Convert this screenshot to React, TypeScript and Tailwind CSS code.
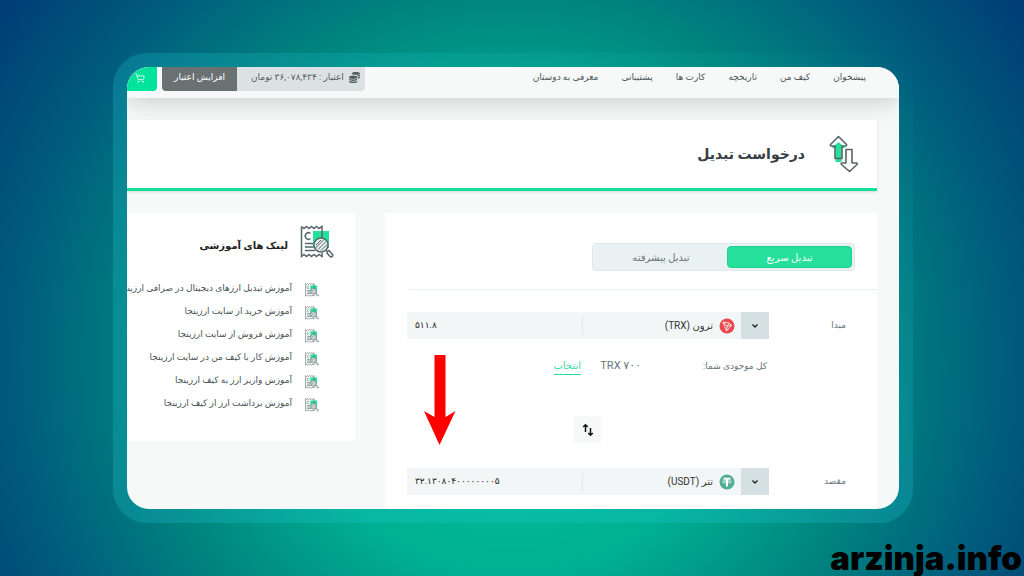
import React from 'react'
import { LuShoppingCart } from 'react-icons/lu'
import { FaCoins } from 'react-icons/fa'

const menu = ['پیشخوان', 'کیف من', 'تاریخچه', 'کارت ها', 'پشتیبانی', 'معرفی به دوستان']

const links = [
  'آموزش تبدیل ارزهای دیجیتال در صرافی ارزینجا',
  'آموزش خرید از سایت ارزینجا',
  'آموزش فروش از سایت ارزینجا',
  'آموزش کار با کیف من در سایت ارزینجا',
  'آموزش واریز ارز به کیف ارزینجا',
  'آموزش برداشت ارز از کیف ارزینجا',
]

const ReceiptIcon = ({ className }: { className: string }) => (
  <svg viewBox="0 0 34 34" className={className} fill="none" stroke="#56666a" strokeWidth="1.5" aria-hidden="true">
    <path d="M13 6h16v17H13z" fill="#24e09a" stroke="none" />
    <path d="M1.5 1.5l2.500 2 2.500-2 2.500 2 2.500-2 2.500 2 2.500-2 2.500 2 3-2V13M1.500 1.500v30l2.500-2 2.500 2 2.500-2 2.500 2 2.500-2 2.500 2 2.500-2 3 2V28" />
    <path d="M10.500 8.500a3.200 3.200 0 1 0 0 5M5 18.500h8M5 22h8M5 25.500h10" />
    <circle cx="21" cy="20" r="7" fill="#e6eeee" />
    <path d="M16 20l5-5M15.500 23l8.500-8.500M18 24.500l8-8M21 25.500l6-6" strokeWidth="1" />
    <path d="M26 25l2 2" />
    <path d="M27.500 26.500l1.500-1 3.500 4c1 1.500-1 3-2.500 2l-3-3.500z" fill="#fff" />
  </svg>
)

const ExchangeIcon = () => (
  <svg viewBox="0 0 30 38" className="h-[38px] w-[30px]" fill="none" stroke="#56666a" strokeWidth="1.6" strokeLinejoin="round" aria-hidden="true">
    <path d="M2.500 13l7-6 7 6h-4v14h-6V13z" fill="#24e09a" stroke="none" />
    <path d="M9.500 1.500L1.500 9.500q-.6 1.500 1 1.500H6v12.500h7V11h3.500q1.600 0 1-1.500z" />
    <path d="M17 14.500h6V28h4.500q1.500 0 .5 1.500L20.500 36.500 12.500 29.500q-1-1.500.5-1.500H17z" />
  </svg>
)

const TronIcon = () => (
  <svg viewBox="0 0 16 16" className="size-4" aria-hidden="true">
    <circle cx="8" cy="8" r="7.500" fill="#e9494f" />
    <path d="M4 4l6.200 1.200L12.500 7.300 7.500 13zM4 4l4.200 4.300M10.200 5.200L8.200 8.300 7.500 13M8.200 8.300l4.300-1" fill="none" stroke="#fff" strokeWidth=".8" />
  </svg>
)

const TetherIcon = () => (
  <svg viewBox="0 0 16 16" className="size-4" aria-hidden="true">
    <circle cx="8" cy="8" r="7.500" fill="#50af95" />
    <path d="M4.500 3.800h7v2H9v6.700H7V5.800H4.500z" fill="#fff" />
    <ellipse cx="8" cy="7.800" rx="4.500" ry="1.100" fill="none" stroke="#fff" strokeWidth=".8" />
  </svg>
)

type RowProps = {
  id: string
  label: string
  coin: string
  amount: string
  icon: React.ReactNode
}

const CoinRow = ({ id, label, coin, amount, icon }: RowProps) => (
  <div className="flex items-center pr-[31px] pl-[22px]">
    <label htmlFor={id} className="w-[77px] text-[9px] text-[#687477]">{label}</label>
    <div className="flex h-[27px] flex-1 items-center bg-[#f3f6f7]">
      <button aria-label="انتخاب ارز" className="flex h-full w-7 items-center justify-center bg-[#d5e0e2]">
        <svg viewBox="0 0 8 8" className="size-2" fill="none" stroke="#222" strokeWidth="1.400" aria-hidden="true"><path d="M1.500 2.500L4 5l2.500-2.500" /></svg>
      </button>
      <div className="flex h-[18px] w-[159px] items-center gap-[6px] border-l border-[#e2e8ea] pr-[6px] text-[10px] text-[#333]">
        {icon}
        <span>{coin}</span>
      </div>
      <input id={id} dir="ltr" defaultValue={amount} className="min-w-0 flex-1 bg-transparent px-2 text-left text-[9px] text-[#222] outline-none" />
    </div>
  </div>
)

const Header = () => (
  <header className="relative flex h-[31px] items-start justify-between bg-[#f7f9f8] pr-[33px] shadow-[0_4px_24px_rgba(0,0,0,0.18)]">
    <nav className="flex gap-[23px] pt-[2px] text-[9px] leading-4 text-[#4c5557]">
      {menu.map((item) => (
        <a key={item} href="#" className="whitespace-nowrap">{item}</a>
      ))}
    </nav>
    <div className="flex h-6 text-[9px]">
      <div className="flex w-[128px] items-center justify-between rounded-br-sm bg-[#dce2e3] pr-[5px] pb-[3px] pl-[14px] whitespace-nowrap text-[#525c60]">
        <FaCoins className="size-[11px]" />
        <span>اعتبار : ۳۶,۰۷۸,۴۳۴ تومان</span>
      </div>
      <button className="w-[75px] rounded-bl-sm bg-[#697173] pb-[3px] text-white">افزایش اعتبار</button>
      <button aria-label="سبد خرید" className="mr-[5px] flex w-[30px] items-center rounded-br-sm bg-[#00e39a] pr-3 pb-[3px] text-white">
        <LuShoppingCart className="size-[10px]" />
      </button>
    </div>
  </header>
)

const Exchange = () => (
  <section className="flex-1 bg-white pt-[30px]">
    <div className="mr-[22px] ml-auto flex h-7 w-[263px] rounded-sm border border-[#dfe9eb] bg-[#e9f1f3] p-[2px] text-[10px]">
      <button className="h-full w-[125px] rounded-sm border border-[#1fd08d] bg-[#24e09a] text-white">تبدیل سریع</button>
      <button className="flex-1 text-[#687477]">تبدیل پیشرفته</button>
    </div>
    <hr className="mt-[18px] mb-[22px] ml-6 border-[#eaf1f2]" />
    <CoinRow id="from" label="مبدا" coin="ترون (TRX)" amount="۵۱۱.۸" icon={<TronIcon />} />
    <div className="flex h-[55px] items-center pr-[110px] text-[9px] text-[#687477]">
      <span className="w-[126px]">کل موجودی شما:</span>
      <span className="w-[60px] text-right text-[11px]" dir="ltr">TRX ۷۰۰</span>
      <a href="#" className="border-b border-[#24e09a] text-[10px] leading-4 text-[#34d9a3]">انتخاب</a>
    </div>
    <div className="flex h-[74px] items-start pt-[22px] pr-[276px]">
      <button aria-label="جابجایی" className="flex size-[27px] items-center justify-center bg-[#f7f9f9]">
        <svg viewBox="0 0 12 14" className="h-[14px] w-3" fill="none" stroke="#111" strokeWidth="1.500" aria-hidden="true">
          <path d="M3.500 9V2M1.200 4l2.300-2.300L5.800 4M8.500 5v7M6.200 10l2.300 2.300 2.300-2.300" />
        </svg>
      </button>
    </div>
    <CoinRow id="to" label="مقصد" coin="تتر (USDT)" amount="۳۲.۱۳۰۸۰۴۰۰۰۰۰۰۰۰۵" icon={<TetherIcon />} />
  </section>
)

const Tutorials = () => (
  <aside className="h-[228px] w-[228px] shrink-0 bg-white pt-[12px] pr-[21px]">
    <div className="flex items-center gap-3">
      <ReceiptIcon className="size-[34px]" />
      <h2 className="pt-[6px] text-[10px] font-bold text-[#222]">لینک های آموزشی</h2>
    </div>
    <ul className="mt-[18px] mr-[15px] text-[9px] leading-[23px] text-[#4c5557]">
      {links.map((link) => (
        <li key={link} className="flex items-center gap-[13px]">
          <ReceiptIcon className="mt-[3px] size-[14px] shrink-0" />
          <a href="#" className="whitespace-nowrap">{link}</a>
        </li>
      ))}
    </ul>
  </aside>
)

const App = () => {
  return (
    <div className="relative min-h-screen bg-[radial-gradient(circle_620px_at_50%_62%,#00c79a,#00b092_35%,#00857f_58%,#005c7d_80%,#003d75)] py-[53px] pr-[111px] pl-[113px] font-['Roboto','DejaVu_Sans',sans-serif]">
      <div className="rounded-[34px] bg-linear-to-tr from-[#20c8d8]/25 via-[#20c8d8]/25 to-[#20c8d8]/0 p-[14px]">
        <main dir="rtl" className="flex h-[442px] flex-col overflow-hidden rounded-[22px] bg-[#f7f9f8]">
          <Header />
          <div className="relative mt-[22px] mr-[22px] flex h-[71px] shrink-0 items-center gap-6 border-b-3 border-[#14df96] bg-white pr-[18px] shadow-sm">
            <ExchangeIcon />
            <h1 className="text-[14px] font-bold text-[#364044]">درخواست تبدیل</h1>
          </div>
          <div className="mt-[22px] mr-[22px] flex flex-1 gap-[30px]">
            <Exchange />
            <Tutorials />
          </div>
        </main>
      </div>
      <svg viewBox="0 0 32 90" className="absolute top-[355px] left-[424px] h-[90px] w-8" aria-hidden="true">
        <path d="M10.500 0h11v62l10-6-16 34L0 56l10.500 6z" fill="#f00" />
      </svg>
      <div className="absolute right-[2px] bottom-0 font-['Inter','Liberation_Sans',sans-serif] text-[33px] leading-[35px] font-black text-black">arzinja.info</div>
    </div>
  )
}

export default App
